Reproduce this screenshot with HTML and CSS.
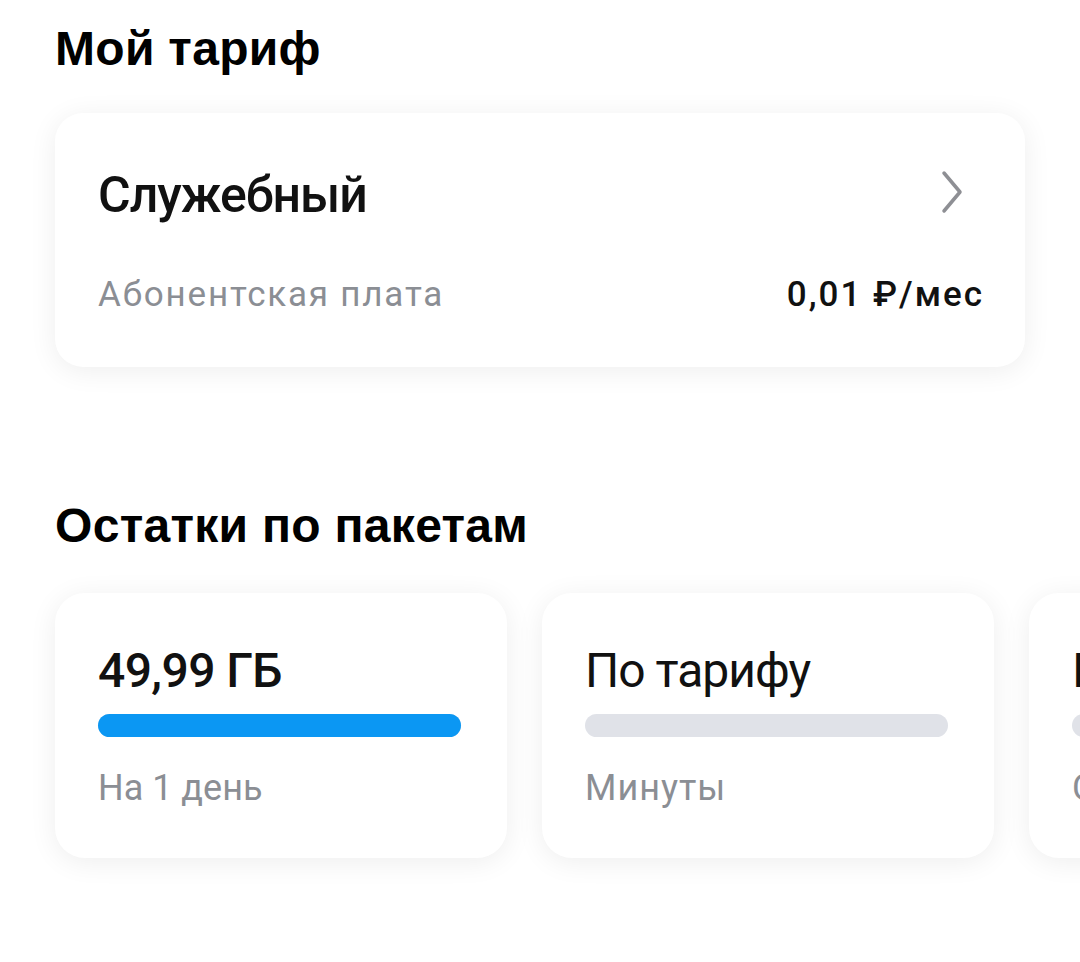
FILE: index.html
```html
<!DOCTYPE html>
<html lang="ru">
<head>
    <meta charset="UTF-8">
    <meta name="viewport" content="width=device-width, initial-scale=1.0">
    <title>Мой тариф</title>
    <link rel="stylesheet" href="styles.css">
</head>
<body>
    <div class="page">
        <h1 class="section-title">Мой тариф</h1>

        <div class="tariff-card">
            <div class="tariff-head">
                <span class="tariff-name">Служебный</span>
                <svg class="chevron" width="24" height="46" viewBox="0 0 24 46">
                    <path d="M4 4 L20 23 L4 42" fill="none" stroke="#8e8f94" stroke-width="3.5" stroke-linecap="round" stroke-linejoin="round"/>
                </svg>
            </div>
            <div class="tariff-row">
                <span class="muted fee">Абонентская плата</span>
                <span class="price">0,01 ₽/мес</span>
            </div>
        </div>

        <h2 class="section-title packages-title">Остатки по пакетам</h2>

        <div class="packages">
            <div class="package">
                <div class="package-value bold">49,99 ГБ</div>
                <div class="bar"><div class="bar-fill" style="width: 100%"></div></div>
                <div class="muted package-label">На 1 день</div>
            </div>
            <div class="package">
                <div class="package-value">По тарифу</div>
                <div class="bar"></div>
                <div class="muted package-label wide">Минуты</div>
            </div>
            <div class="package">
                <div class="package-value">По тарифу</div>
                <div class="bar"></div>
                <div class="muted package-label wide">СМС</div>
            </div>
        </div>
    </div>
</body>
</html>
```

FILE: styles.css
```css
body {
    margin: 0;
    background-color: #fff;
    font-family: Roboto, "Liberation Sans", sans-serif;
    color: #111;
}

.page {
    padding: 21px 0 0 55px;
    overflow: hidden;
    height: 941px;
}

.section-title {
    margin: 0;
    font-family: "Liberation Sans", Arial, sans-serif;
    font-size: 48px;
    line-height: 56px;
    font-weight: bold;
    color: #000;
    letter-spacing: 0.3px;
}

.tariff-card {
    width: 970px;
    box-sizing: border-box;
    margin-top: 36px;
    padding: 52px 43px 51px 43px;
    background-color: #fff;
    border-radius: 28px;
    box-shadow: 0 4px 28px rgba(0, 0, 0, 0.07);
}

.tariff-head {
    display: flex;
    justify-content: space-between;
    align-items: center;
    height: 60px;
}

.tariff-name {
    font-size: 50px;
    line-height: 60px;
    font-weight: 500;
    letter-spacing: -1px;
}

.chevron {
    margin-right: 18px;
    margin-top: -6px;
}

.tariff-row {
    display: flex;
    justify-content: space-between;
    margin-top: 49px;
    font-size: 35px;
    line-height: 42px;
}

.muted {
    color: #8b8e94;
}

.fee {
    letter-spacing: 1.8px;
}

.price {
    font-weight: 500;
    color: #111;
    letter-spacing: 2px;
    margin-right: -2px;
}

.packages-title {
    margin-top: 131px;
}

.packages {
    display: flex;
    gap: 35px;
    margin-top: 39px;
}

.package {
    flex: 0 0 452px;
    box-sizing: border-box;
    padding: 50px 46px 49px 43px;
    background-color: #fff;
    border-radius: 30px;
    box-shadow: 0 4px 28px rgba(0, 0, 0, 0.07);
}

.package-value {
    font-size: 48px;
    line-height: 56px;
    letter-spacing: -1px;
}

.package-value.bold {
    font-weight: 500;
    letter-spacing: -0.6px;
}

.bar {
    margin-top: 15px;
    height: 23px;
    border-radius: 12px;
    background-color: #e0e2e8;
}

.bar-fill {
    height: 100%;
    border-radius: 12px;
    background-color: #0b97f3;
}

.package-label {
    margin-top: 30px;
    font-size: 36px;
    line-height: 42px;
}

.package-label.wide {
    letter-spacing: 1px;
}
```
